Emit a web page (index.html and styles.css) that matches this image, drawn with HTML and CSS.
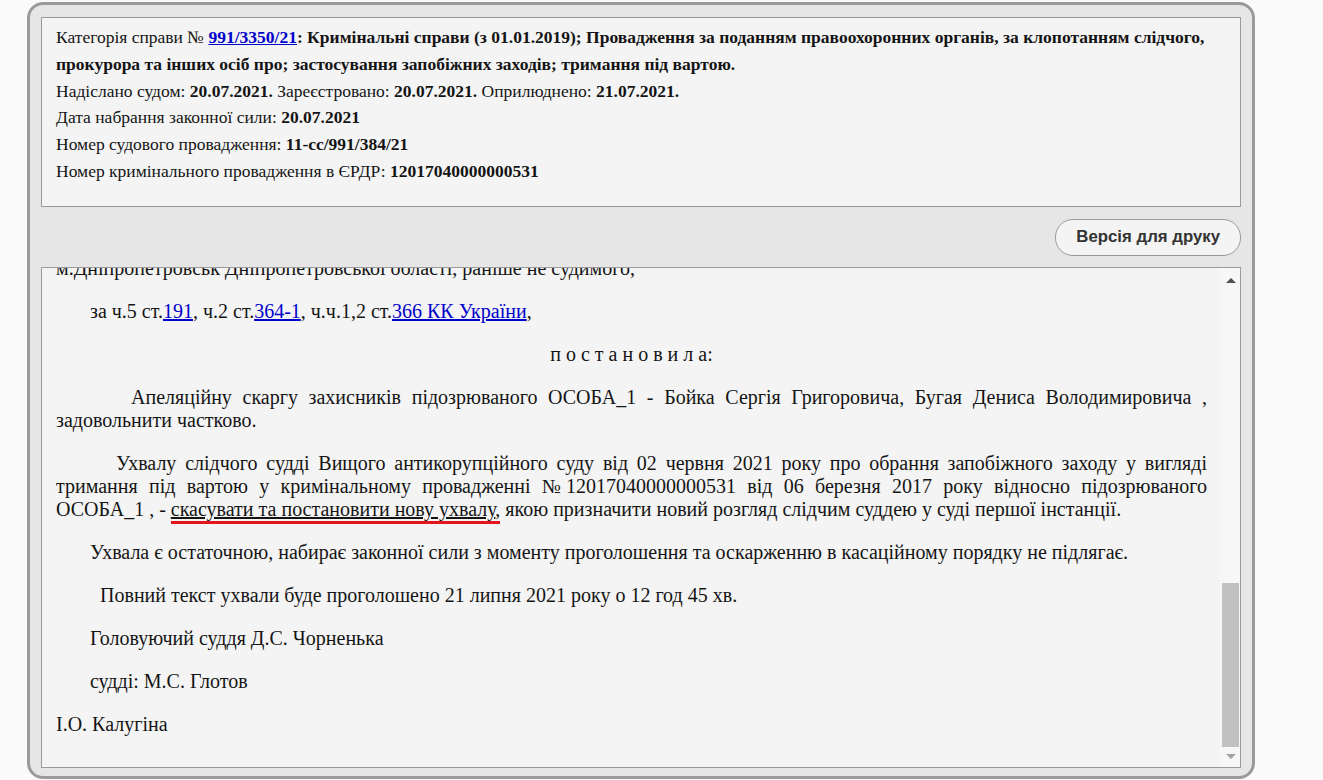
FILE: index.html
```html
<!DOCTYPE html>
<html lang="uk">
<head>
<meta charset="utf-8">
<title>Ухвала</title>
<link rel="stylesheet" href="styles.css">
</head>
<body>
<div class="panel">
  <div class="info">
    <div class="line">Категорія справи № <a class="case-link" href="#">991/3350/21</a><b>: Кримінальні справи (з 01.01.2019); Провадження за поданням правоохоронних органів, за клопотанням слідчого, прокурора та інших осіб про; застосування запобіжних заходів; тримання під вартою.</b></div>
    <div class="line">Надіслано судом: <b>20.07.2021.</b> Зареєстровано: <b>20.07.2021.</b> Оприлюднено: <b>21.07.2021.</b></div>
    <div class="line">Дата набрання законної сили: <b>20.07.2021</b></div>
    <div class="line">Номер судового провадження: <b>11-сс/991/384/21</b></div>
    <div class="line">Номер кримінального провадження в ЄРДР: <b>12017040000000531</b></div>
  </div>
  <div class="actions">
    <button class="print-btn" type="button">Версія для друку</button>
  </div>
  <div class="doc-box">
    <div class="doc-view">
      <div class="doc">
        <p>м.Дніпропетровськ Дніпропетровської області, раніше не судимого,</p>
        <p class="ind-34">за ч.5 ст.<a href="#">191</a>, ч.2 ст.<a href="#">364-1</a>, ч.ч.1,2 ст.<a href="#">366 КК України</a>,</p>
        <p class="center">п о с т а н о в и л а:</p>
        <p class="just ind-75">Апеляційну скаргу захисників підозрюваного ОСОБА_1 - Бойка Сергія Григоровича, Бугая Дениса Володимировича , задовольнити частково.</p>
        <p class="just ind-60">Ухвалу слідчого судді Вищого антикорупційного суду від 02 червня 2021 року про обрання запобіжного заходу у вигляді тримання під вартою у кримінальному провадженні <span class="nowrap">№ 12017040000000531</span> від 06 березня 2017 року відносно підозрюваного ОСОБА_1 , - <span class="mark"><span class="ul">скасувати та постановити нову ухвалу</span>,</span> якою призначити новий розгляд слідчим суддею у суді першої інстанції.</p>
        <p class="ind-34">Ухвала є остаточною, набирає законної сили з моменту проголошення та оскарженню в касаційному порядку не підлягає.</p>
        <p class="ind-44">Повний текст ухвали буде проголошено 21 липня 2021 року о 12 год 45 хв.</p>
        <p class="ind-34">Головуючий суддя Д.С. Чорненька</p>
        <p class="ind-34">судді: М.С. Глотов</p>
        <p>І.О. Калугіна</p>
      </div>
    </div>
    <div class="scrollbar">
      <div class="sb-btn sb-up"><span class="arrow-up"></span></div>
      <div class="sb-track"><div class="sb-thumb"></div></div>
      <div class="sb-btn sb-down"><span class="arrow-down"></span></div>
    </div>
  </div>
</div>
</body>
</html>
```
FILE: styles.css
```css
html, body {
  margin: 0;
  padding: 0;
}
body {
  background: #fafafa;
  font-family: "Liberation Serif", "Times New Roman", serif;
  color: #141414;
}
.panel {
  margin: 2px 0 0 27px;
  width: 1228px;
  box-sizing: border-box;
  border: 3px solid #9a9a9a;
  border-radius: 16px;
  background: #e6e6e6;
  padding: 12px 11px 8px;
}
.info {
  background: #f4f4f4;
  border: 1px solid #9a9a9a;
  padding: 6px 14px 21px;
  font-size: 17.5px;
  line-height: 26.8px;
}
.info b {
  font-weight: bold;
}
a {
  color: #0000cc;
  text-decoration: underline;
}
.case-link {
  font-weight: bold;
}
.actions {
  display: flex;
  justify-content: flex-end;
  margin: 12px 0 11px;
}
.print-btn {
  height: 37px;
  padding: 0 20px;
  border: 1px solid #9a9a9a;
  border-radius: 18px;
  background: #f4f4f4;
  font: bold 16.8px "Liberation Sans", Arial, sans-serif;
  color: #333;
  cursor: pointer;
}
.doc-box {
  display: flex;
  height: 501px;
  box-sizing: border-box;
  border: 1px solid #9a9a9a;
  background: #f4f4f4;
}
.doc-view {
  flex: 1;
  overflow: hidden;
  padding: 0 13px 0 14px;
}
.doc {
  margin-top: -11px;
  font-size: 20px;
  line-height: 23px;
}
.doc p {
  margin: 0 0 20px;
}
.doc .just {
  text-align: justify;
}
.doc .center {
  text-align: center;
}
.ind-34 { text-indent: 34px; }
.ind-44 { text-indent: 44px; }
.ind-60 { text-indent: 60px; }
.ind-75 { text-indent: 75px; }
.nowrap {
  display: inline-block;
  text-indent: 0;
  white-space: nowrap;
}
.ul {
  text-decoration: underline;
}
.mark {
  padding-bottom: 1px;
  border-bottom: 3px solid #e3161c;
}
.scrollbar {
  width: 20px;
  display: flex;
  flex-direction: column;
  background: #f7f7f7;
}
.sb-btn {
  display: flex;
  justify-content: center;
  align-items: center;
  padding-left: 1px;
}
.sb-up {
  height: 26px;
}
.sb-down {
  height: 20px;
}
.arrow-up {
  width: 0;
  height: 0;
  border-left: 5px solid transparent;
  border-right: 5px solid transparent;
  border-bottom: 5px solid #505050;
}
.arrow-down {
  width: 0;
  height: 0;
  border-left: 5px solid transparent;
  border-right: 5px solid transparent;
  border-top: 5px solid #a3a3a3;
}
.sb-track {
  flex: 1;
  display: flex;
  flex-direction: column;
  justify-content: flex-end;
}
.sb-thumb {
  height: 164px;
  margin: 0 1px 0 2px;
  background: #c1c1c1;
}
```
